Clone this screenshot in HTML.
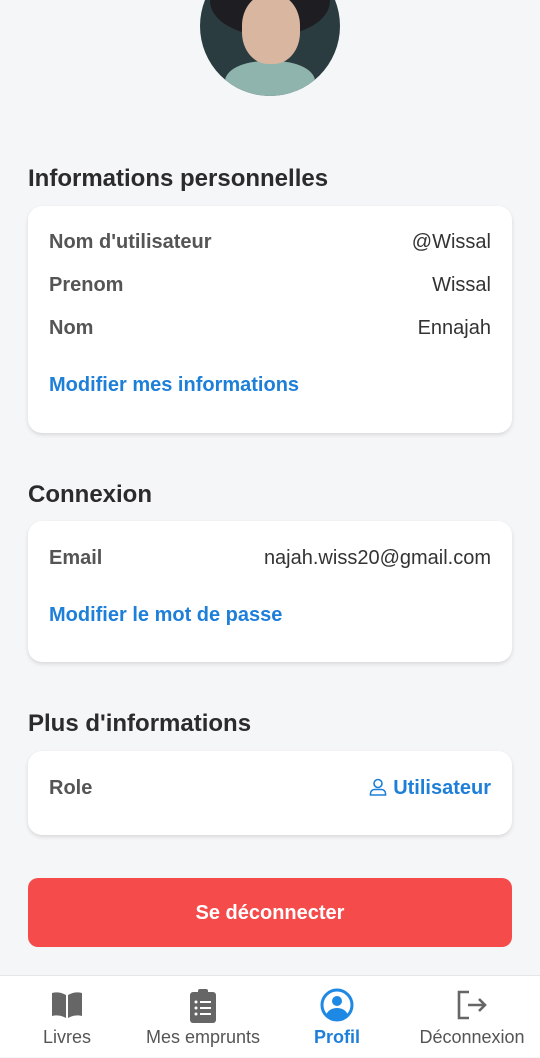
<!DOCTYPE html>
<html><head><meta charset="utf-8"><style>
*{margin:0;padding:0;box-sizing:border-box}
body{width:540px;height:1057px;background:#f5f6f8;font-family:"Liberation Sans",Roboto,sans-serif;position:relative;overflow:hidden;color:#333}
.av{position:absolute;left:200px;top:-44px;width:140px;height:140px;border-radius:50%;background:#2a3c40;overflow:hidden}
.av .shirt{position:absolute;left:25px;top:105px;width:90px;height:45px;background:#8fb3ad;border-radius:45% 45% 0 0}
.av .hair{position:absolute;left:10px;top:10px;width:120px;height:70px;background:#1e1e22;border-radius:50%}
.av .face{position:absolute;left:42px;top:38px;width:58px;height:70px;background:#d9b6a0;border-radius:45%}
h2{position:absolute;left:28px;font-size:24px;font-weight:bold;color:#2b2b2b}
.card{position:absolute;left:28px;width:484px;background:#fff;border-radius:14px;box-shadow:0 2px 4px rgba(0,0,0,.12)}
.row{position:absolute;left:21px;right:21px;display:flex;justify-content:space-between;font-size:20px}
.row b{color:#555}
.row span{color:#333}
.link{position:absolute;left:21px;font-size:20px;font-weight:bold;color:#1e7fd8}
.btn{position:absolute;left:28px;top:878px;width:484px;height:69px;background:#f54b4b;border-radius:10px;color:#fff;font-weight:bold;font-size:20px;text-align:center;line-height:71px}
.nav{position:absolute;left:0;top:975px;width:540px;height:82px;background:#fff;border-top:1px solid #e6e6e6}
.it{position:absolute;top:0;height:82px;text-align:center;font-size:18px;color:#555}
.it svg{position:absolute;left:50%;transform:translateX(-50%)}
.it div{position:absolute;left:0;right:0;top:51px;white-space:nowrap}
</style></head><body>
<div class="av"><div class="hair"></div><div class="shirt"></div><div class="face"></div></div>

<h2 style="top:165px">Informations personnelles</h2>
<div class="card" style="top:206px;height:227px">
<div class="row" style="top:25px"><b>Nom d'utilisateur</b><span>@Wissal</span></div>
<div class="row" style="top:68px"><b>Prenom</b><span>Wissal</span></div>
<div class="row" style="top:111px"><b>Nom</b><span>Ennajah</span></div>
<div class="link" style="top:168px">Modifier mes informations</div>
</div>

<h2 style="top:481px">Connexion</h2>
<div class="card" style="top:521px;height:141px">
<div class="row" style="top:26px"><b>Email</b><span>najah.wiss20@gmail.com</span></div>
<div class="link" style="top:83px">Modifier le mot de passe</div>
</div>

<h2 style="top:710px">Plus d'informations</h2>
<div class="card" style="top:751px;height:84px">
<div class="row" style="top:26px"><b>Role</b><span style="color:#1e7fd8;font-weight:bold"><svg width="18" height="18" viewBox="0 0 18 18" style="vertical-align:-2px;margin-right:6px" fill="none" stroke="#1e7fd8" stroke-width="1.6"><circle cx="9" cy="5.5" r="4"/><path d="M1.5 17v-1.5a4 4 0 0 1 4-4h7a4 4 0 0 1 4 4V17z"/></svg>Utilisateur</span></div>
</div>

<div class="btn">Se déconnecter</div>

<div class="nav">
<div class="it" style="left:28px;width:78px"><svg style="top:14px" width="34" height="30" viewBox="0 0 34 30"><path d="M2 3q7-2 14 2v23q-7-4-14-2z" fill="#666"/><path d="M18 5q7-4 14-2v23q-7-2-14 2z" fill="#666"/></svg><div>Livres</div></div>
<div class="it" style="left:138px;width:130px"><svg style="top:12px" width="28" height="36" viewBox="0 0 28 36"><rect x="1" y="4" width="26" height="31" rx="3" fill="#666"/><rect x="9" y="1" width="10" height="6" rx="2" fill="#666"/><g fill="#fff"><circle cx="7" cy="14" r="1.5"/><circle cx="7" cy="20" r="1.5"/><circle cx="7" cy="26" r="1.5"/><rect x="11" y="13" width="11" height="2"/><rect x="11" y="19" width="11" height="2"/><rect x="11" y="25" width="11" height="2"/></g></svg><div>Mes emprunts</div></div>
<div class="it" style="left:297px;width:80px;color:#1e7fd8;font-weight:bold"><svg style="top:12px" width="34" height="34" viewBox="0 0 34 34"><circle cx="17" cy="17" r="15" fill="none" stroke="#1e88e5" stroke-width="3"/><circle cx="17" cy="13" r="5" fill="#1e88e5"/><path d="M6 27q3-7 11-7t11 7q-4 5-11 5t-11-5z" fill="#1e88e5"/></svg><div>Profil</div></div>
<div class="it" style="left:412px;width:120px"><svg style="top:13px" width="32" height="32" viewBox="0 0 32 32" fill="none" stroke="#666" stroke-width="2.6"><path d="M13 3H3v26h10"/><path d="M12 16h17M23 10l6 6-6 6"/></svg><div>Déconnexion</div></div>
</div>
</body></html>
